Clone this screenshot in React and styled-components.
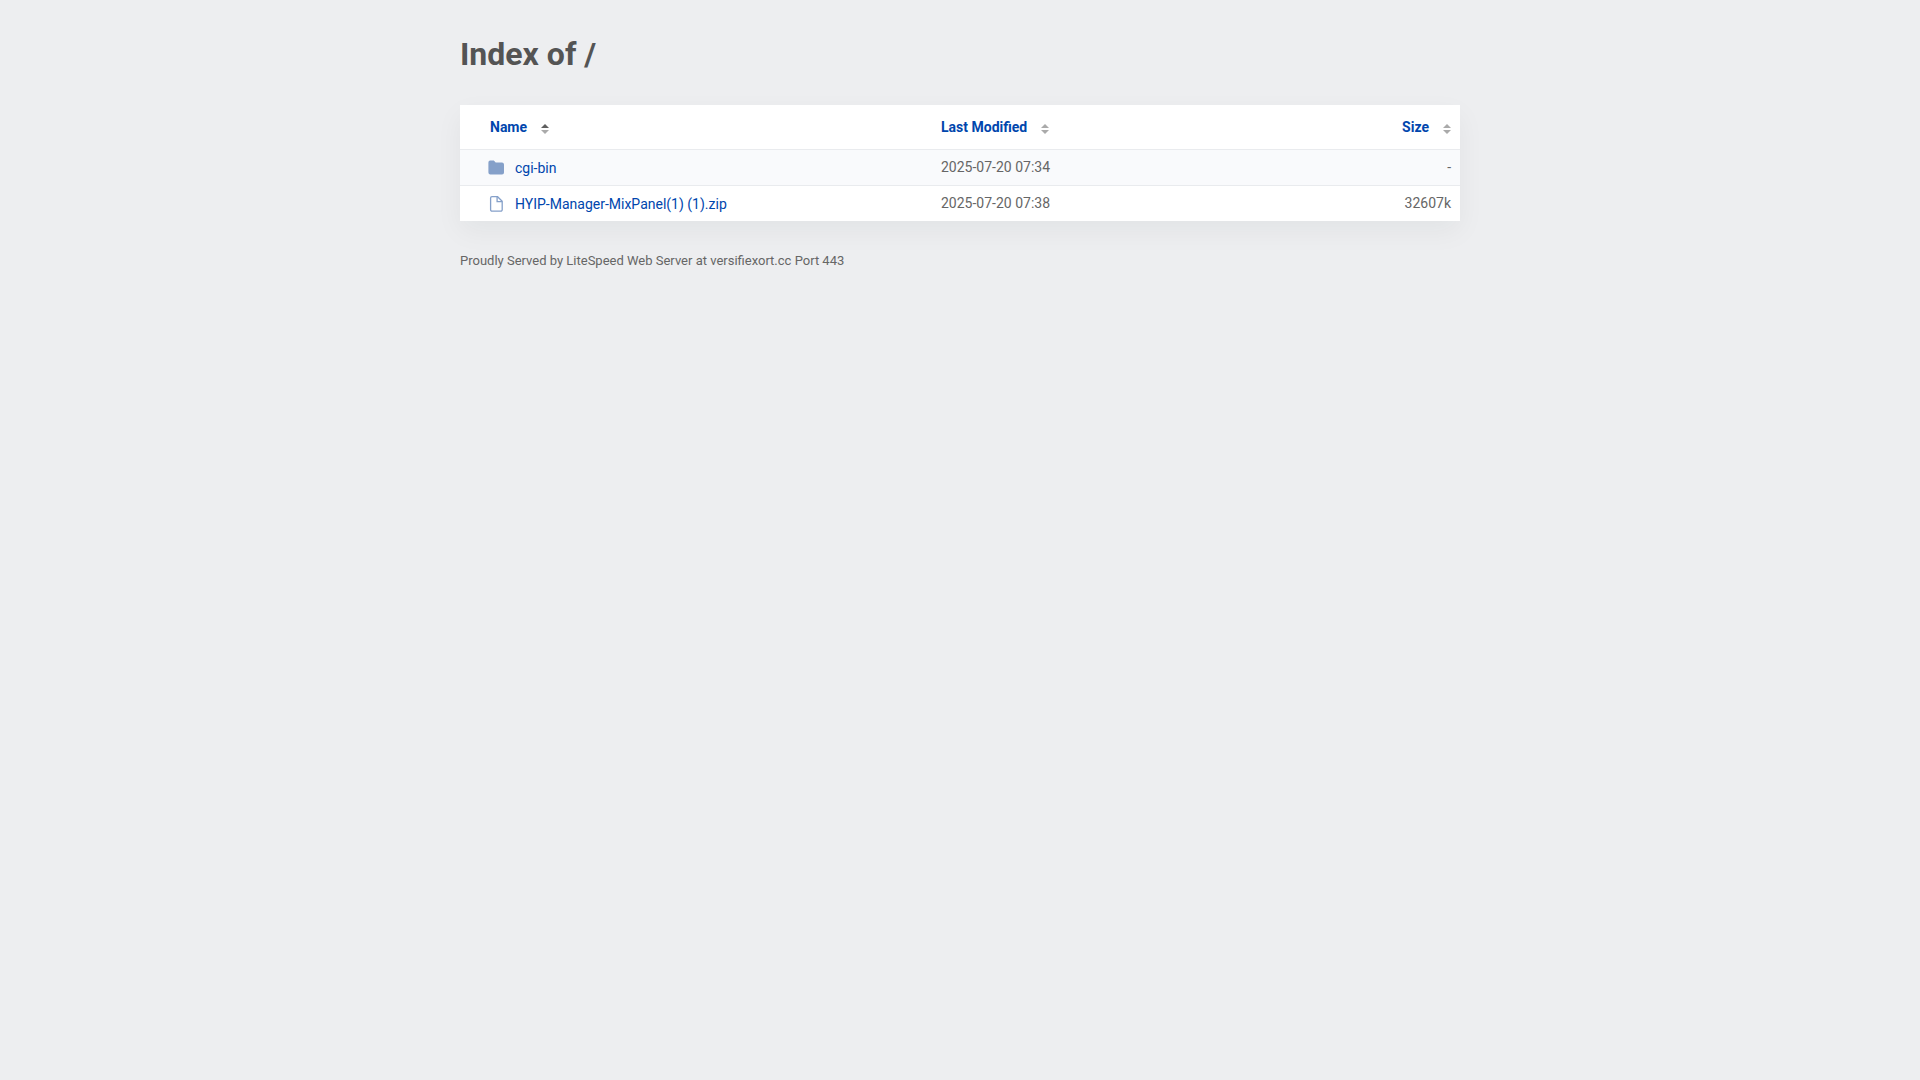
import React from 'react';
import styled, { createGlobalStyle } from 'styled-components';

const GlobalStyle = createGlobalStyle`
  *, *::before, *::after {
    box-sizing: border-box;
  }

  body {
    margin: 0;
    background-color: #edeef0;
    color: #545454;
    font-family: Roboto, "Liberation Sans", sans-serif;
    font-size: 14px;
    line-height: 20px;
  }
`;

const Container = styled.main`
  max-width: 1000px;
  margin: 0 auto;
  padding-top: 36px;
`;

const Title = styled.h1`
  margin: 0 0 33px;
  font-size: 32px;
  line-height: 36px;
  font-weight: bold;
`;

const FileTable = styled.table`
  width: 100%;
  table-layout: fixed;
  border-collapse: separate;
  border-spacing: 0;
  background-color: #fff;
  box-shadow: 0 10px 26px rgba(0, 41, 41, 0.05);
`;

const NameCol = styled.col`
  width: 47%;
`;

const DateCol = styled.col`
  width: 30%;
`;

const HeadCell = styled.th`
  height: 44px;
  padding: ${({ $first }) => ($first ? '0 10px 0 30px' : '0 9px 0 11px')};
  text-align: ${({ $right }) => ($right ? 'right' : 'left')};
`;

const SortButton = styled.button`
  display: inline-flex;
  align-items: center;
  gap: 14px;
  padding: 0;
  border: 0;
  background: none;
  color: #0046ad;
  font: inherit;
  font-weight: bold;
  cursor: pointer;
`;

const SortArrows = styled.svg`
  display: block;
  width: 8px;
  height: 10px;
  margin-top: 3px;
`;

const Row = styled.tr`
  background-color: ${({ $shaded }) => ($shaded ? '#f9fafc' : '#fff')};
`;

const Cell = styled.td`
  height: 36px;
  padding: ${({ $first }) => ($first ? '0 10px 0 28px' : '0 9px 2px 11px')};
  border-top: 1px solid #e9ebee;
  color: #666;
  text-align: ${({ $right }) => ($right ? 'right' : 'left')};
`;

const FileLink = styled.a`
  display: flex;
  align-items: center;
  gap: 11px;
  color: #0046ad;
  text-decoration: none;

  &:hover {
    text-decoration: underline;
  }
`;

const Icon = styled.svg`
  flex: none;
  width: 16px;
  height: 16px;
`;

const Footer = styled.footer`
  margin-top: 30px;
  color: #666;
  font-size: 13px;
`;

const FolderIcon = () => (
  <Icon viewBox="0 0 16 16" aria-hidden="true">
    <path
      fill="#85a0c9"
      d="M2.2 0.6h3.6l1.9 2h6.3A2 2 0 0 1 16 4.5v8.1a2 2 0 0 1-2 2H2.4a2 2 0 0 1-2-2V2.4A1.8 1.8 0 0 1 2.2 0.6z"
    />
  </Icon>
);

const DocumentIcon = () => (
  <Icon viewBox="0 0 16 16" fill="none" stroke="#85a0c9" aria-hidden="true">
    <path d="M4 0.7h5.6l4.6 4.5v8.6a1.4 1.4 0 0 1-1.4 1.4H4a1.4 1.4 0 0 1-1.4-1.4V2.1A1.4 1.4 0 0 1 4 0.7z" strokeWidth="1.3" />
    <path d="M9.1 0.9v4.7h4.9" strokeWidth="1.3" />
  </Icon>
);

const SortIcon = ({ active }) => (
  <SortArrows viewBox="0 0 8 10" aria-hidden="true">
    <path d="M4 0l4 4H0z" fill={active ? '#5f5f5f' : '#aaa'} />
    <path d="M0 6h8l-4 4z" fill="#aaa" />
  </SortArrows>
);

const columns = [
  { label: 'Name', active: true },
  { label: 'Last Modified' },
  { label: 'Size', right: true },
];

const files = [
  { name: 'cgi-bin', modified: '2025-07-20 07:34', size: '-', folder: true },
  { name: 'HYIP-Manager-MixPanel(1) (1).zip', modified: '2025-07-20 07:38', size: '32607k' },
];

const App = () => (
  <>
    <GlobalStyle />
    <Container>
      <Title>Index of /</Title>
      <FileTable>
        <colgroup>
          <NameCol />
          <DateCol />
          <col />
        </colgroup>
        <thead>
          <tr>
            {columns.map(({ label, active, right }) => (
              <HeadCell
                key={label}
                scope="col"
                $first={active}
                $right={right}
                aria-sort={active ? 'ascending' : 'none'}
              >
                <SortButton type="button">
                  {label}
                  <SortIcon active={active} />
                </SortButton>
              </HeadCell>
            ))}
          </tr>
        </thead>
        <tbody>
          {files.map((file) => (
            <Row key={file.name} $shaded={file.folder}>
              <Cell $first>
                <FileLink href={`/${encodeURIComponent(file.name)}`}>
                  {file.folder ? <FolderIcon /> : <DocumentIcon />}
                  {file.name}
                </FileLink>
              </Cell>
              <Cell>{file.modified}</Cell>
              <Cell $right>{file.size}</Cell>
            </Row>
          ))}
        </tbody>
      </FileTable>
      <Footer>Proudly Served by LiteSpeed Web Server at versifiexort.cc Port 443</Footer>
    </Container>
  </>
);

export default App;
